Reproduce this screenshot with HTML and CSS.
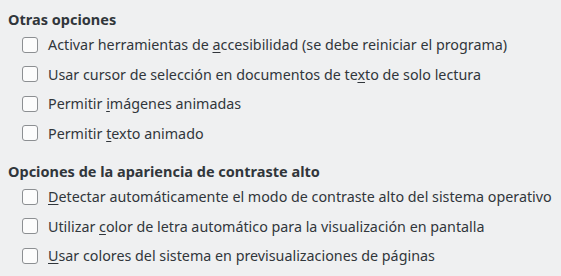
FILE: index.html
```html
<!DOCTYPE html>
<html lang="es">
<head>
    <meta charset="UTF-8">
    <title>Opciones</title>
    <link rel="stylesheet" href="styles.css">
</head>
<body>
    <div class="panel">
        <div class="group">
            <div class="group-title">Otras opciones</div>
            <label class="check"><span class="box"></span><span>Activar herramientas de <u>a</u>ccesibilidad (se debe reiniciar el programa)</span></label>
            <label class="check"><span class="box"></span><span>Usar cursor de selección en documentos de te<u>x</u>to de solo lectura</span></label>
            <label class="check"><span class="box"></span><span>Permitir <u>i</u>mágenes animadas</span></label>
            <label class="check"><span class="box"></span><span>Permitir <u>t</u>exto animado</span></label>
        </div>
        <div class="group">
            <div class="group-title">Opciones de la apariencia de contraste alto</div>
            <label class="check"><span class="box"></span><span><u>D</u>etectar automáticamente el modo de contraste alto del sistema operativo</span></label>
            <label class="check"><span class="box"></span><span>Utilizar <u>c</u>olor de letra automático para la visualización en pantalla</span></label>
            <label class="check"><span class="box"></span><span><u>U</u>sar colores del sistema en previsualizaciones de páginas</span></label>
        </div>
    </div>
</body>
</html>
```

FILE: styles.css
```css
body {
    margin: 0;
    background-color: #eff0f1;
    color: #31363b;
    font-family: 'Noto Sans', sans-serif;
    font-size: 14.3px;
}
.panel {
    padding: 8px 8px 0 8px;
}
.group {
    margin-bottom: 12px;
}
.group-title {
    font-weight: bold;
    font-size: 14.5px;
    height: 22px;
    line-height: 22px;
}
.check {
    display: flex;
    align-items: center;
    height: 29.5px;
    padding-left: 14px;
    white-space: nowrap;
}
.check u {
    text-decoration-thickness: 1px;
    text-underline-offset: 2px;
}
.box {
    width: 14px;
    height: 14px;
    border: 1px solid #8c8f92;
    border-radius: 3px;
    background-color: #fcfcfc;
    margin-right: 10px;
    flex-shrink: 0;
}
```
